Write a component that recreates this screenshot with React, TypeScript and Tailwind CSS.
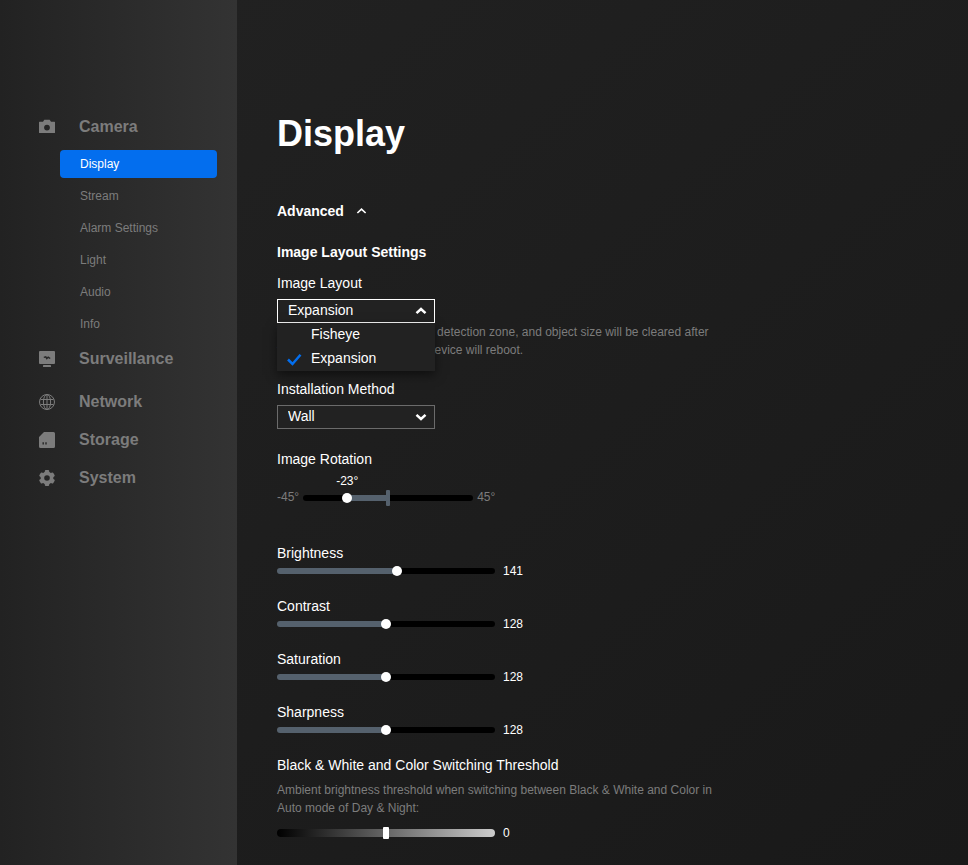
import { useState } from "react";
import type { CSSProperties, ReactNode } from "react";

const SUB_ITEMS = ["Display", "Stream", "Alarm Settings", "Light", "Audio", "Info"];

function CameraIcon() {
  return (
    <svg width="16" height="16" viewBox="0 0 16 16" fill="currentColor" fillRule="evenodd" aria-hidden="true">
      <path d="M5.300 .8h5.400l1.300 2h3.500a.5.5 0 0 1 .5.5v10.200a.5.5 0 0 1-.5.5H.5a.5.5 0 0 1-.5-.5V3.300a.5.5 0 0 1 .5-.5H4zM8 5.700a2.900 2.900 0 1 0 0 5.800 2.900 2.900 0 0 0 0-5.800z" />
    </svg>
  );
}

function MonitorIcon() {
  return (
    <svg width="16" height="16" viewBox="0 0 16 16" fill="currentColor" aria-hidden="true">
      <path d="M1 0h14a1 1 0 0 1 1 1v11a1 1 0 0 1-1 1H1a1 1 0 0 1-1-1V1a1 1 0 0 1 1-1z" />
      <rect x="4" y="14" width="8" height="2" rx=".6" />
      <path d="M4.800 6.400 6.800 5.900 7.800 7.600 9.200 6.100 11.200 7.500" fill="none" stroke="#262626" strokeWidth="1.400" />
    </svg>
  );
}

function GlobeIcon() {
  return (
    <svg width="16" height="16" viewBox="0 0 16 16" fill="none" stroke="currentColor" strokeWidth="1" aria-hidden="true">
      <circle cx="8" cy="8" r="7.500" />
      <ellipse cx="8" cy="8" rx="3.600" ry="7.500" />
      <path d="M8 .5v15M1.500 5.500h13M1.500 10.500h13" />
    </svg>
  );
}

function StorageIcon() {
  return (
    <svg width="16" height="16" viewBox="0 0 16 16" fill="currentColor" fillRule="evenodd" aria-hidden="true">
      <path d="M5 0h9.500A1.500 1.500 0 0 1 16 1.500v13a1.500 1.500 0 0 1-1.500 1.500h-13A1.500 1.500 0 0 1 0 14.500V5zM3.500 10.300v2.200h1.400v-2.200zM6.300 10.300v2.200h1.400v-2.200z" />
    </svg>
  );
}

function GearIcon() {
  return (
    <svg width="16" height="16" viewBox="0 0 16 16" aria-hidden="true">
      <g fill="currentColor">
        <rect x="5.800" y="0" width="4.400" height="16" rx="1" />
        <rect x="5.800" y="0" width="4.400" height="16" rx="1" transform="rotate(60 8 8)" />
        <rect x="5.800" y="0" width="4.400" height="16" rx="1" transform="rotate(120 8 8)" />
        <circle cx="8" cy="8" r="6.400" />
      </g>
      <circle cx="8" cy="8" r="2.800" fill="#262626" />
    </svg>
  );
}

function Chevron({ up, className }: { up: boolean; className: string }) {
  return (
    <svg className={className} width="12" height="8" viewBox="0 0 12 8" fill="none" stroke="currentColor" aria-hidden="true">
      <path d={up ? "M1.500 6.200 6 2l4.500 4.200" : "M1.500 1.800 6 6l4.500-4.200"} />
    </svg>
  );
}

function NavRow({ icon, label }: { icon: ReactNode; label: string }) {
  return (
    <a href="#" className="flex h-7 items-center gap-6 pl-[39px] text-base font-bold">
      {icon}
      {label}
    </a>
  );
}

const THUMB =
  "block h-4 cursor-pointer appearance-none bg-transparent [&::-webkit-slider-runnable-track]:h-1.5 [&::-webkit-slider-runnable-track]:rounded-full [&::-webkit-slider-runnable-track]:bg-(image:--track) [&::-webkit-slider-thumb]:-mt-0.5 [&::-webkit-slider-thumb]:size-2.5 [&::-webkit-slider-thumb]:appearance-none [&::-webkit-slider-thumb]:rounded-full [&::-webkit-slider-thumb]:bg-white";

function track(from: number, to: number) {
  return {
    "--track": `linear-gradient(to right, #000 ${from}%, #55616d ${from}%, #55616d ${to}%, #000 ${to}%)`,
  } as CSSProperties;
}

function LevelSlider({ label, initial }: { label: string; initial: number }) {
  const [value, setValue] = useState(initial);
  const id = label.toLowerCase();
  return (
    <div>
      <label htmlFor={id} className="block">
        {label}
      </label>
      <div className="flex h-4 items-center gap-2">
        <input
          id={id}
          type="range"
          min={0}
          max={255}
          value={value}
          onChange={(e) => setValue(Number(e.target.value))}
          className={`w-[218px] ${THUMB}`}
          style={track(0, (value / 255) * 100)}
        />
        <output htmlFor={id} className="text-xs">
          {value}
        </output>
      </div>
    </div>
  );
}

const SELECT = "block h-6 w-full appearance-none border bg-[#222222] pb-0.5 pl-2.5 outline-none";

export default function App() {
  const [open, setOpen] = useState(true);
  const [layout, setLayout] = useState("Expansion");
  const [rotation, setRotation] = useState(-23);
  const [threshold, setThreshold] = useState(0);
  const at = ((rotation + 45) / 90) * 100;

  return (
    <div className="flex min-h-screen bg-linear-to-br/srgb from-[#222222] to-[#191919] font-['Liberation_Sans',Arial,sans-serif] text-sm text-white">
      <nav className="w-[237px] shrink-0 bg-linear-to-r/srgb from-[#222222] to-[#333333] pt-[113px] text-[#7c7c7c]">
        <NavRow icon={<CameraIcon />} label="Camera" />
        <ul className="mt-[9px] mr-5 mb-[7px] ml-[60px] flex flex-col gap-1 text-xs">
          {SUB_ITEMS.map((item) => (
            <li key={item}>
              <a
                href="#"
                className={`flex h-7 items-center rounded-[4px] pl-5 ${item === "Display" ? "bg-[#036eee] text-white" : ""}`}
              >
                {item}
              </a>
            </li>
          ))}
        </ul>
        <NavRow icon={<MonitorIcon />} label="Surveillance" />
        <div className="mt-[15px] flex flex-col gap-2.5">
          <NavRow icon={<GlobeIcon />} label="Network" />
          <NavRow icon={<StorageIcon />} label="Storage" />
          <NavRow icon={<GearIcon />} label="System" />
        </div>
      </nav>

      <main className="min-w-0 flex-1 px-10 pt-28 pb-5 leading-5">
        <h1 className="text-4xl leading-[44px] font-bold">Display</h1>

        <button type="button" aria-expanded="true" className="mt-[45px] flex items-center gap-3 font-bold">
          Advanced
          <Chevron up className="h-[8px] w-[11px] stroke-[1.8]" />
        </button>

        <h2 className="mt-[21px] font-bold">Image Layout Settings</h2>

        <label htmlFor="layout" className="mt-[11px] block">
          Image Layout
        </label>
        <div className="relative mt-1.5 w-[158px]">
          <select
            id="layout"
            value={layout}
            onMouseDown={(e) => {
              e.preventDefault();
              setOpen(!open);
            }}
            onChange={(e) => setLayout(e.target.value)}
            className={`${SELECT} ${open ? "border-white" : "border-[#6b6b6b]"}`}
          >
            <option>Fisheye</option>
            <option>Expansion</option>
          </select>
          <Chevron up={open} className="pointer-events-none absolute top-2 right-2 stroke-[2.5]" />
          {open && (
            <ul
              role="listbox"
              aria-label="Image Layout"
              className="absolute top-full left-0 w-full bg-[#222222] shadow-[0_4px_10px_rgba(0,0,0,0.5)]"
            >
              {["Fisheye", "Expansion"].map((name) => (
                <li
                  key={name}
                  role="option"
                  aria-selected={name === layout}
                  onClick={() => {
                    setLayout(name);
                    setOpen(false);
                  }}
                  className="flex h-6 items-center gap-2.5 pb-0.5 pl-2.5"
                >
                  <svg className="h-3 w-3.5 overflow-visible" viewBox="0 0 14 12" fill="none" stroke="#036eee" strokeWidth="2.500" aria-hidden="true">
                    {name === layout && <path d="M1 7.500 5.500 12 13.500 2.800" />}
                  </svg>
                  {name}
                </li>
              ))}
            </ul>
          )}
        </div>
        <p className="max-w-[440px] text-xs leading-[18px] text-[#7c7c7c]">
          The configured privacy mask, detection zone, and object size will be cleared after the layout changes, and
          the device will reboot.
        </p>

        <label htmlFor="method" className="mt-5 block">
          Installation Method
        </label>
        <div className="relative mt-1.5 w-[158px]">
          <select id="method" className={`${SELECT} border-[#6b6b6b]`}>
            <option>Wall</option>
            <option>Ceiling</option>
          </select>
          <Chevron up={false} className="pointer-events-none absolute top-2 right-2 stroke-[2.5]" />
        </div>

        <label htmlFor="rotation" className="mt-5 block">
          Image Rotation
        </label>
        <div className="mt-[19px] flex h-5 items-center gap-1 text-xs text-[#7c7c7c]">
          <span className="pb-0.5">-45°</span>
          <div className="relative w-[170px]">
            <input
              id="rotation"
              type="range"
              min={-45}
              max={45}
              value={rotation}
              onChange={(e) => setRotation(Number(e.target.value))}
              className={`w-full ${THUMB}`}
              style={track(Math.min(at, 50), Math.max(at, 50))}
            />
            <span className="pointer-events-none absolute top-0 left-1/2 h-4 w-1 -translate-x-1/2 rounded-[1px] bg-[#55616d]" />
            <div className="pointer-events-none absolute inset-x-[5px] -top-[18px]">
              <output
                htmlFor="rotation"
                className="relative inline-block -translate-x-1/2 leading-[18px] text-white"
                style={{ left: `${at}%` }}
              >
                {rotation}°
              </output>
            </div>
          </div>
          <span className="pb-0.5">45°</span>
        </div>

        <div className="mt-[35px] flex flex-col gap-[17px]">
          <LevelSlider label="Brightness" initial={141} />
          <LevelSlider label="Contrast" initial={128} />
          <LevelSlider label="Saturation" initial={128} />
          <LevelSlider label="Sharpness" initial={128} />
          <div>
            <label htmlFor="threshold" className="block">
              Black &amp; White and Color Switching Threshold
            </label>
            <p className="mt-1.5 max-w-[440px] text-xs leading-[18px] text-[#7c7c7c]">
              Ambient brightness threshold when switching between Black &amp; White and Color in Auto mode of Day &amp;
              Night:
            </p>
            <div className="mt-2 flex h-4 items-center gap-2">
              <input
                id="threshold"
                type="range"
                min={-50}
                max={50}
                value={threshold}
                onChange={(e) => setThreshold(Number(e.target.value))}
                className="block h-4 w-[218px] cursor-pointer appearance-none bg-transparent [&::-webkit-slider-runnable-track]:h-2 [&::-webkit-slider-runnable-track]:rounded-full [&::-webkit-slider-runnable-track]:bg-linear-to-r/srgb [&::-webkit-slider-runnable-track]:from-black [&::-webkit-slider-runnable-track]:to-[#cccccc] [&::-webkit-slider-thumb]:-mt-0.5 [&::-webkit-slider-thumb]:h-3 [&::-webkit-slider-thumb]:w-1.5 [&::-webkit-slider-thumb]:appearance-none [&::-webkit-slider-thumb]:rounded-[1px] [&::-webkit-slider-thumb]:bg-white"
              />
              <output htmlFor="threshold" className="text-xs">
                {threshold}
              </output>
            </div>
          </div>
        </div>
      </main>
    </div>
  );
}
